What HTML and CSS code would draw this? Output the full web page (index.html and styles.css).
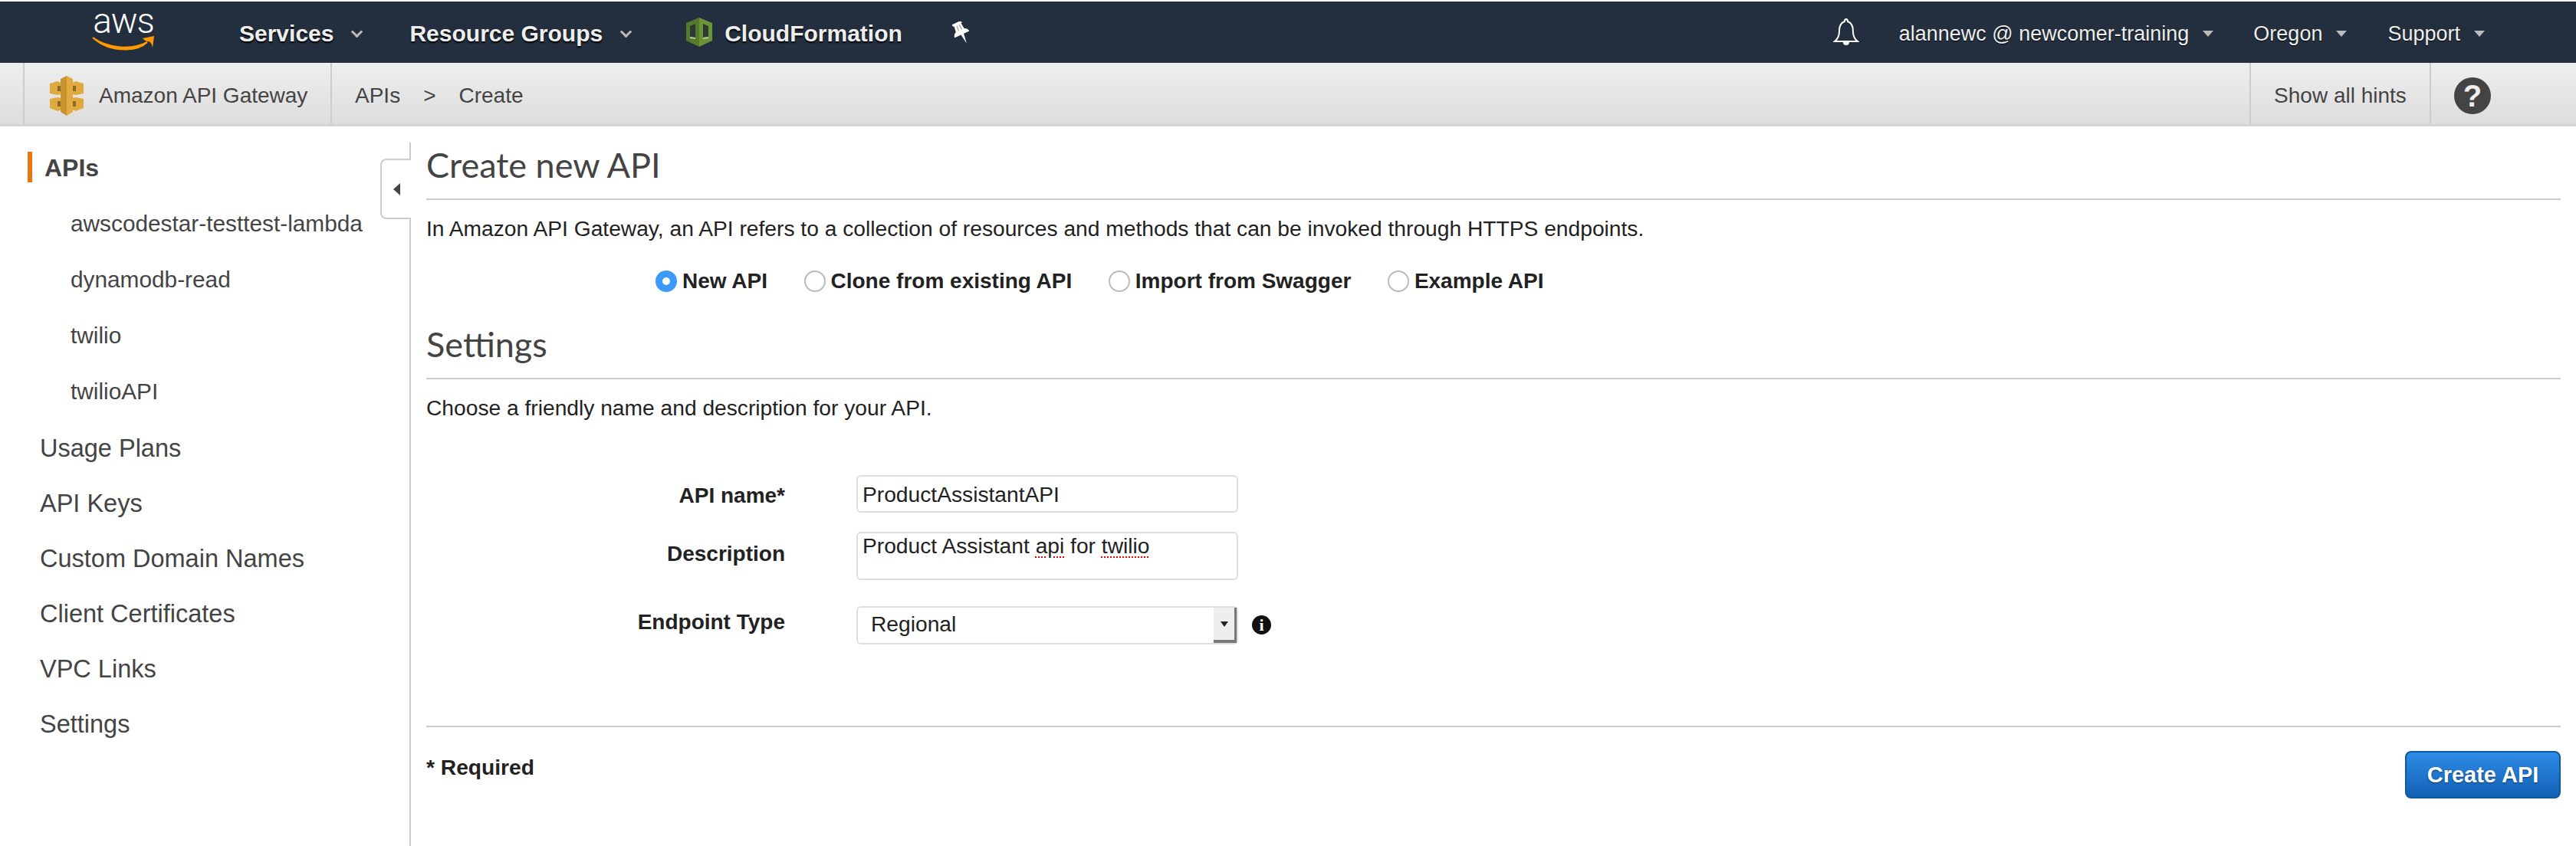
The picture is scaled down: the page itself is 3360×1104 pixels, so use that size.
FILE: index.html
```html
<!DOCTYPE html>
<html lang="en">
<head>
    <meta charset="UTF-8">
    <title>Create new API - Amazon API Gateway</title>
    <link rel="stylesheet" href="styles.css">
</head>
<body>
    <nav class="topnav">
        <div class="logo">
            <span class="logo-text">aws</span>
            <svg class="logo-smile" width="82" height="22" viewBox="0 0 82 22">
                <path d="M1 3C20 17 52 20 72 9C66 15 58 18 45 18.500C28 19 12 13 1 3Z" fill="#f90" stroke="#f90" stroke-width="2"/>
                <path d="M66 4L81 1L79 16C78 11 76 8 73 8C70 8 68 6 66 4Z" fill="#f90"/>
            </svg>
        </div>
        <a class="nav-main nav-services">Services<span class="chevron"></span></a>
        <a class="nav-main nav-groups">Resource Groups<span class="chevron"></span></a>
        <svg class="cf-icon" width="34" height="38" viewBox="0 0 34 38">
            <path d="M17 0L34 7V30L17 38Z" fill="#6d9338"/>
            <path d="M17 0L0 7V30L17 38Z" fill="#567a2c"/>
            <path d="M5 11L12 8V26L5 25Z" fill="#2c3a34"/>
            <path d="M22 8L29 11V25L22 26Z" fill="#2c3a34"/>
            <path d="M5 25L12 26V28L5 27ZM22 26L29 25V27L22 28Z" fill="#b9c9a2"/>
        </svg>
        <a class="nav-main nav-cf">CloudFormation</a>
        <svg class="pin-icon" width="26" height="28" viewBox="0 0 26 28">
            <g transform="rotate(-25 13 14)">
                <path d="M6 0H19V3H17.500L18.500 11C21 12 23 14 23 17H15L13 30L11 17H2C2 14 4 12 6.500 11L7.500 3H6Z" fill="#fff"/>
                <path d="M10.500 4H11.500L11 11H10ZM14 4H15L15.500 11H14.500Z" fill="#8a8f96"/>
            </g>
        </svg>
        <div class="nav-right">
            <svg class="bell-icon" width="34" height="36" viewBox="0 0 34 36">
                <path d="M17 1C16 1 15 2 15 4C9 6 8 11 8 17C8 23 6 27 2 30H32C28 27 26 23 26 17C26 11 25 6 19 4C19 2 18 1 17 1Z" fill="none" stroke="#fff" stroke-width="2"/>
                <path d="M13 31C13 34 15 35 17 35C19 35 21 34 21 31Z" fill="#fff"/>
            </svg>
            <a class="nav-sub nav-user">alannewc @ newcomer-training<span class="caret"></span></a>
            <a class="nav-sub nav-region">Oregon<span class="caret"></span></a>
            <a class="nav-sub nav-support">Support<span class="caret"></span></a>
        </div>
    </nav>

    <div class="subnav">
        <div class="subnav-edge"></div>
        <div class="subnav-service">
            <svg class="gateway-icon" width="44" height="52" viewBox="0 0 44 52">
                <path d="M0 10L10 7L15 9V24L10 25L0 23Z" fill="#e0a93e"/>
                <path d="M44 10L34 7L29 9V24L34 25L44 23Z" fill="#e0a93e"/>
                <path d="M0 30L10 28L15 29V44L10 46L0 42Z" fill="#e0a93e"/>
                <path d="M44 30L34 28L29 29V44L34 46L44 42Z" fill="#e0a93e"/>
                <path d="M10 13H34V20H10ZM10 33H34V40H10Z" fill="#8a6a28"/>
                <path d="M22 0L14 4V47L22 52Z" fill="#c8932f"/>
                <path d="M22 0L30 4V47L22 52Z" fill="#e3ab3f"/>
            </svg>
            <span>Amazon API Gateway</span>
        </div>
        <div class="crumbs">
            <span>APIs</span>
            <span class="crumb-sep">&gt;</span>
            <span>Create</span>
        </div>
        <div class="subnav-hints">Show all hints</div>
        <div class="subnav-help"><span class="help-icon">?</span></div>
    </div>

    <div class="layout">
        <aside class="sidebar">
            <div class="side-active">APIs</div>
            <ul class="api-list">
                <li>awscodestar-testtest-lambda</li>
                <li>dynamodb-read</li>
                <li>twilio</li>
                <li>twilioAPI</li>
            </ul>
            <ul class="side-links">
                <li>Usage Plans</li>
                <li>API Keys</li>
                <li>Custom Domain Names</li>
                <li>Client Certificates</li>
                <li>VPC Links</li>
                <li>Settings</li>
            </ul>
            <div class="side-toggle"><span class="side-arrow"></span></div>
        </aside>

        <main class="content">
            <h1 class="section-title">Create new API</h1>
            <p class="intro">In Amazon API Gateway, an API refers to a collection of resources and methods that can be invoked through HTTPS endpoints.</p>
            <div class="radio-row">
                <label class="radio-item"><input type="radio" name="kind" checked>New API</label>
                <label class="radio-item"><input type="radio" name="kind">Clone from existing API</label>
                <label class="radio-item"><input type="radio" name="kind">Import from Swagger</label>
                <label class="radio-item"><input type="radio" name="kind">Example API</label>
            </div>
            <h2 class="section-title settings-title">Settings</h2>
            <p class="intro">Choose a friendly name and description for your API.</p>

            <div class="form">
                <div class="form-row row-name">
                    <div class="form-label">API name*</div>
                    <div class="field field-name">ProductAssistantAPI</div>
                </div>
                <div class="form-row row-desc">
                    <div class="form-label">Description</div>
                    <div class="field field-desc">Product Assistant <span class="misspelt">api</span> for <span class="misspelt">twilio</span></div>
                </div>
                <div class="form-row row-type">
                    <div class="form-label">Endpoint Type</div>
                    <div class="field field-select">Regional<span class="select-btn"><span class="select-arrow"></span></span></div>
                    <span class="info-icon">i</span>
                </div>
            </div>

            <div class="form-foot">
                <strong class="required">* Required</strong>
                <button class="btn-create">Create API</button>
            </div>
        </main>
    </div>
</body>
</html>
```

FILE: styles.css
```css
* {
    box-sizing: border-box;
}
html, body {
    height: 100%;
}
body {
    margin: 0;
    padding-top: 2px;
    background: #fff;
    color: #222;
    font-family: "Liberation Sans", Arial, sans-serif;
    font-size: 28.2px;
    display: flex;
    flex-direction: column;
    overflow: hidden;
}
ul {
    list-style: none;
    margin: 0;
    padding: 0;
}

/* top navigation */
.topnav {
    height: 80px;
    flex: none;
    background: #232f3e;
    display: flex;
    align-items: center;
    padding-left: 120px;
    color: #eee;
}
.logo {
    width: 82px;
    height: 50px;
    position: relative;
}
.logo-text {
    display: block;
    margin-top: -6px;
    color: #fff;
    font-family: Roboto, sans-serif;
    font-size: 46px;
    font-weight: 300;
    letter-spacing: -1px;
    line-height: 32px;
    text-align: center;
}
.logo-smile {
    position: absolute;
    left: 0;
    top: 29px;
}
.nav-main {
    padding-top: 4px;
    font-size: 30px;
    font-weight: bold;
    text-shadow: 0 2px 2px #000;
    display: flex;
    align-items: center;
}
.nav-services {
    margin-left: 110px;
}
.nav-groups {
    margin-left: 63px;
}
.chevron {
    width: 11px;
    height: 11px;
    border-right: 3px solid #bbb;
    border-bottom: 3px solid #bbb;
    transform: rotate(45deg);
    margin: -6px 0 0 25px;
}
.cf-icon {
    margin-left: 73px;
}
.nav-cf {
    margin-left: 16px;
}
.pin-icon {
    margin-left: 64px;
    margin-top: -1px;
}
.nav-right {
    margin-left: auto;
    display: flex;
    align-items: center;
    padding-right: 119px;
}
.bell-icon {
    margin-right: 52px;
}
.nav-sub {
    padding-top: 4px;
    font-size: 27px;
    text-shadow: 0 1px 1px #000;
    display: flex;
    align-items: center;
}
.nav-region {
    margin-left: 52px;
}
.nav-support {
    margin-left: 53px;
}
.caret {
    width: 0;
    height: 0;
    border-left: 7px solid transparent;
    border-right: 7px solid transparent;
    border-top: 8px solid #bbb;
    margin-left: 18px;
}

/* service bar */
.subnav {
    height: 83px;
    flex: none;
    display: flex;
    background: linear-gradient(#eee, #ddd);
    border-bottom: 3px solid #d5d5d5;
    color: #444;
    font-size: 28px;
}
.subnav-edge {
    width: 32px;
    border-right: 2px solid #ccc;
}
.subnav-service {
    width: 401px;
    border-right: 2px solid #ccc;
    display: flex;
    align-items: center;
    padding: 6px 0 0 33px;
    gap: 20px;
}
.crumbs {
    display: flex;
    align-items: center;
    padding: 6px 0 0 30px;
    flex: 1;
}
.crumb-sep {
    margin: 0 30px;
}
.subnav-hints {
    width: 237px;
    padding-top: 6px;
    border-left: 2px solid #ccc;
    border-right: 2px solid #ccc;
    display: flex;
    align-items: center;
    justify-content: center;
}
.subnav-help {
    width: 189px;
    display: flex;
    align-items: center;
    padding: 6px 0 0 30px;
}
.help-icon {
    width: 48px;
    height: 48px;
    border-radius: 50%;
    background: #444;
    color: #eee;
    font-size: 40px;
    font-weight: bold;
    line-height: 48px;
    text-align: center;
}

/* page */
.layout {
    flex: 1;
    display: flex;
    min-height: 0;
}
.sidebar {
    width: 536px;
    flex: none;
    margin-top: 21px;
    border-right: 2px solid #ccc;
    position: relative;
    color: #444;
}
.side-active {
    margin: 12px 0 0 36px;
    padding-left: 16px;
    height: 40px;
    line-height: 42px;
    border-left: 6px solid #e47911;
    font-size: 32px;
    font-weight: bold;
}
.api-list {
    margin: 17px 0 2px;
}
.api-list li {
    height: 73px;
    line-height: 73px;
    padding-left: 92px;
    font-size: 29.8px;
}
.side-links li {
    height: 72px;
    line-height: 72px;
    padding-left: 52px;
    font-size: 32.5px;
}
.side-toggle {
    position: absolute;
    right: -2px;
    top: 21px;
    width: 40px;
    height: 79px;
    background: #fff;
    border: 2px solid #ccc;
    border-right: none;
    border-radius: 8px 0 0 8px;
    display: flex;
    align-items: center;
    padding-left: 15px;
}
.side-arrow {
    width: 0;
    height: 0;
    border-top: 8px solid transparent;
    border-bottom: 8px solid transparent;
    border-right: 9px solid #444;
}
.content {
    flex: 1;
    padding: 0 20px 0 20px;
    position: relative;
}
.section-title {
    margin: 0;
    height: 96px;
    padding-top: 25px;
    border-bottom: 2px solid #ccc;
    font-family: "Lato", sans-serif;
    font-size: 45px;
    font-weight: 400;
    line-height: 50px;
    color: #444;
}
.intro {
    margin: 18px 0 0;
    line-height: 38px;
}
.radio-row {
    display: flex;
    margin: 36px 0 0 299px;
    height: 28px;
    gap: 47.5px;
    font-size: 28px;
    font-weight: bold;
}
.radio-item {
    display: flex;
    align-items: center;
    gap: 7px;
}
.radio-item input {
    appearance: none;
    width: 28px;
    height: 28px;
    margin: 0;
    border-radius: 50%;
    border: 2px solid #bbb;
    background: #fff;
}
.radio-item input:checked {
    border: 9px solid #3b99fc;
}
.settings-title {
    margin-top: 20px;
    height: 94px;
    padding-top: 23px;
}
.form {
    margin-top: 69px;
}
.form-row {
    display: flex;
    align-items: flex-start;
}
.form-label {
    width: 468px;
    text-align: right;
    font-size: 28px;
    font-weight: bold;
}
.field {
    width: 498px;
    margin-left: 93px;
    background: #fff;
    border: 2px solid #ddd;
    border-radius: 6px;
    padding-left: 6px;
}
.row-name {
    height: 49px;
}
.row-name .form-label {
    line-height: 54px;
}
.field-name {
    height: 49px;
    line-height: 46px;
}
.row-desc {
    height: 63px;
    margin-top: 25px;
}
.row-desc .form-label {
    line-height: 58px;
}
.field-desc {
    height: 63px;
    line-height: 32px;
}
.misspelt {
    text-decoration: underline dotted #e00;
    text-decoration-thickness: 2px;
    text-underline-offset: 4px;
}
.row-type {
    height: 50px;
    margin-top: 34px;
}
.row-type .form-label {
    line-height: 42px;
}
.field-select {
    height: 50px;
    padding-left: 17px;
    line-height: 42px;
    position: relative;
}
.select-btn {
    position: absolute;
    right: 0;
    top: 0;
    bottom: 0;
    width: 30px;
    background: #eee;
    border-right: 3px solid #777;
    border-bottom: 4px solid #777;
    display: flex;
    align-items: center;
    justify-content: center;
}
.select-arrow {
    width: 0;
    height: 0;
    border-left: 5px solid transparent;
    border-right: 5px solid transparent;
    border-top: 7px solid #222;
}
.info-icon {
    width: 25px;
    height: 25px;
    margin: 12px 0 0 18px;
    border-radius: 50%;
    background: #111;
    color: #fff;
    font-family: "Liberation Serif", serif;
    font-size: 22px;
    font-weight: bold;
    line-height: 25px;
    text-align: center;
}
.form-foot {
    margin-top: 106px;
    border-top: 2px solid #ccc;
    display: flex;
    justify-content: space-between;
    align-items: flex-start;
    padding-top: 31px;
}
.required {
    margin-top: 2px;
    line-height: 38px;
}
.btn-create {
    width: 203px;
    height: 62px;
    border: 2px solid #0e5a9e;
    border-radius: 8px;
    background: linear-gradient(#2f8ce6, #1260b4);
    color: #fff;
    font-family: inherit;
    font-size: 29px;
    font-weight: bold;
    text-shadow: 0 1px 2px #0a3c70;
}
```
